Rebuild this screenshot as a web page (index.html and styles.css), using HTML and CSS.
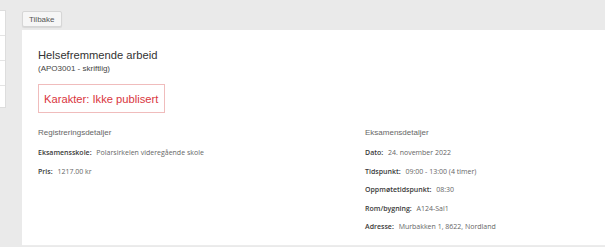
FILE: index.html
```html
<!DOCTYPE html>
<html lang="nb">
<head>
  <meta charset="UTF-8" />
  <meta name="viewport" content="width=device-width, initial-scale=1.0" />
  <title>Eksamen</title>
  <link rel="stylesheet" href="styles.css">
</head>
<body>
  <div class="page">
    <!-- sidemeny -->
    <ul class="side-menu">
      <li></li>
      <li></li>
      <li></li>
      <li></li>
    </ul>

    <div class="main">
      <button class="back-btn">Tilbake</button>

      <div class="card">
        <h2 class="exam-title">Helsefremmende arbeid</h2>
        <div class="exam-code">(APO3001 - skriftlig)</div>
        <div class="grade-box">Karakter: Ikke publisert</div>

        <div class="details">
          <div class="col">
            <h3>Registreringsdetaljer</h3>
            <p><b>Eksamensskole:</b> Polarsirkelen videregående skole</p>
            <p><b>Pris:</b> 1217.00 kr</p>
          </div>
          <div class="col">
            <h3>Eksamensdetaljer</h3>
            <p><b>Dato:</b> 24. november 2022</p>
            <p><b>Tidspunkt:</b> 09:00 - 13:00 (4 timer)</p>
            <p><b>Oppmøtetidspunkt:</b> 08:30</p>
            <p><b>Rom/bygning:</b> A124-Sal1</p>
            <p><b>Adresse:</b> Murbakken 1, 8622, Nordland</p>
          </div>
        </div>
      </div>
    </div>
  </div>
</body>
</html>
```

FILE: styles.css
```css
body{margin:0;background:#eaeaea;font-family:'Liberation Sans',Arial,sans-serif;color:#333;}
.page{display:flex;height:247px;overflow:hidden;}

.side-menu{list-style:none;margin:10px 0 0;padding:0;width:6px;height:98px;background:#fff;border:1px solid #ddd;border-left:none;box-sizing:border-box;}
.side-menu li{height:24px;border-bottom:1px solid #e4e4e4;}
.side-menu li:last-child{border-bottom:none;}

.main{flex:1;margin-left:16px;display:flex;flex-direction:column;}
.back-btn{align-self:flex-start;margin-top:11px;height:16px;padding:0 6px;font-family:'Liberation Sans',Arial,sans-serif;font-size:8px;color:#555;background:#f6f6f6;border:1px solid #d6d6d6;border-radius:2px;box-shadow:0 1px 1px rgba(0,0,0,.08);}

.card{margin-top:3px;height:216px;background:#fff;padding:17px 16px 0 16px;box-sizing:border-box;border-bottom:1px solid #ececec;}
.exam-title{margin:0;font-size:11.2px;font-weight:normal;color:#333;line-height:16px;}
.exam-code{font-size:8px;color:#444;margin-top:1px;}
.grade-box{display:inline-block;margin-top:11px;padding:7px 6px 6px 5px;border:1px solid #f0bcbc;color:#d9363e;font-size:11.2px;line-height:14px;}

.details{display:grid;grid-template-columns:327px 1fr;margin-top:14px;font-family:'Open Sans',sans-serif;}
.details h3{margin:0 0 5px;font-family:'Liberation Sans',Arial,sans-serif;font-size:8px;font-weight:normal;color:#666;line-height:12px;}
.details p{margin:0;font-size:7px;line-height:18.5px;color:#666;}
.details p b{color:#3a3a3a;font-weight:600;margin-right:3px;}
```
